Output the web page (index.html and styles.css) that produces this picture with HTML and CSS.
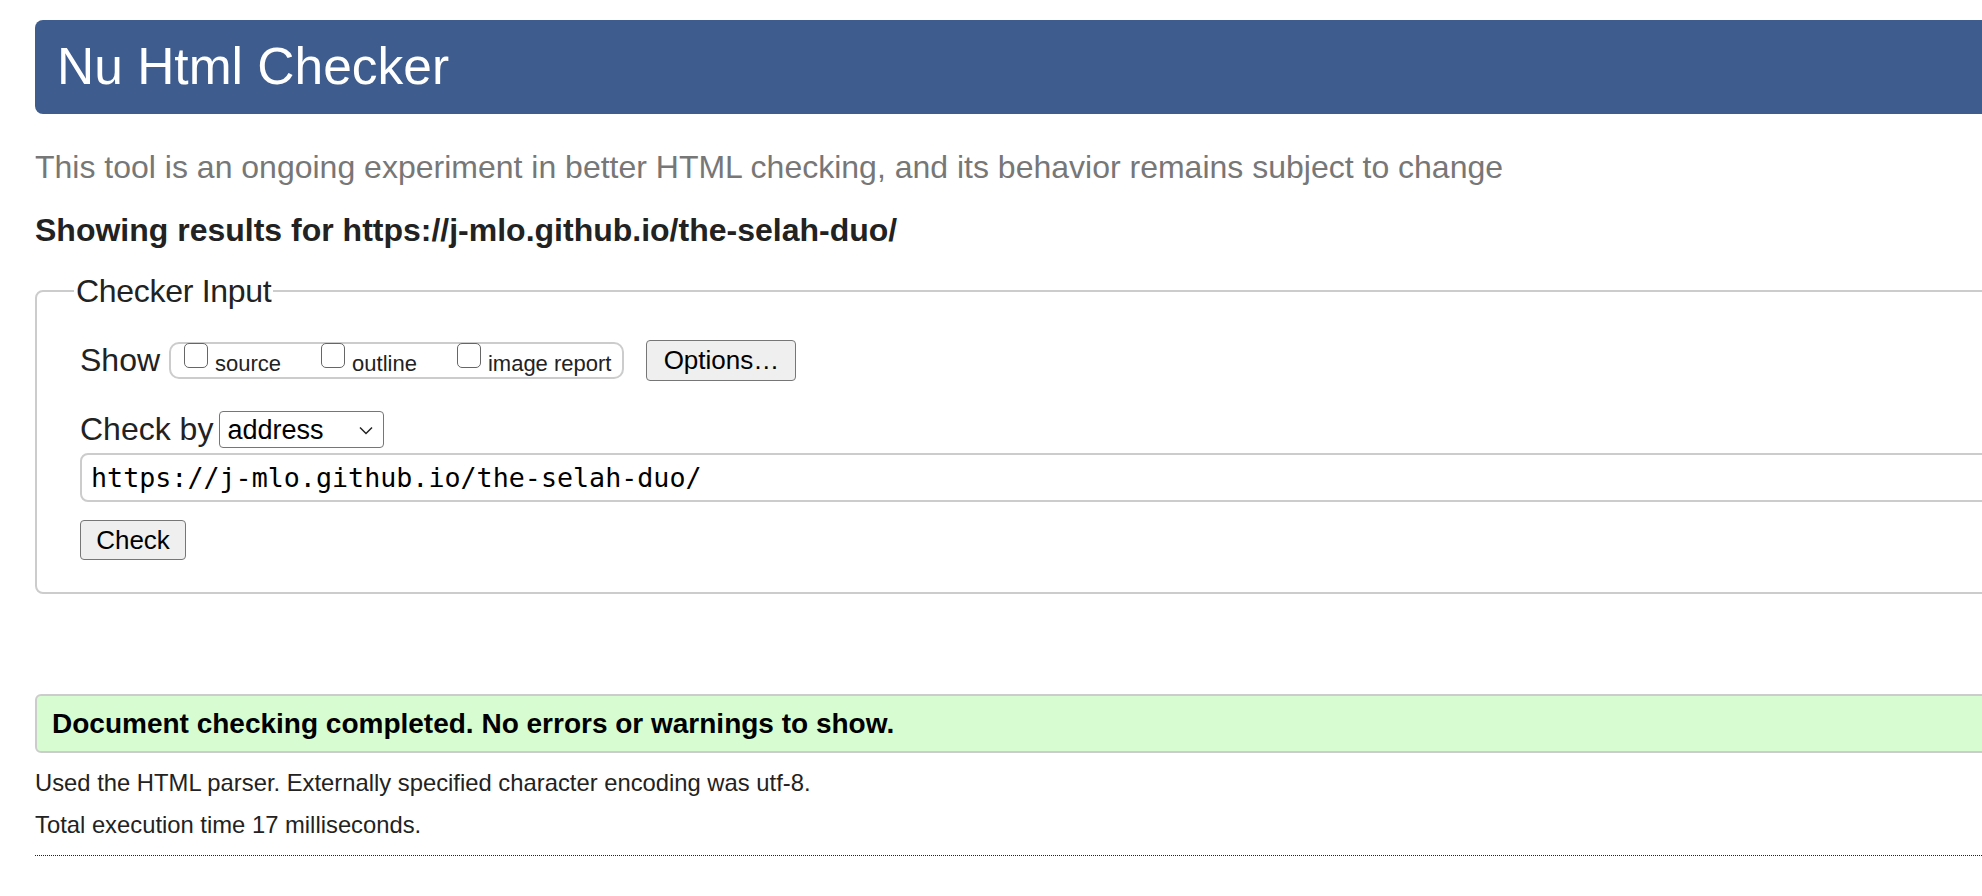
FILE: index.html
```html
<!DOCTYPE html>
<html lang="en">
<head>
<meta charset="utf-8">
<title>Showing results for https://j-mlo.github.io/the-selah-duo/ - Nu Html Checker</title>
<link rel="stylesheet" href="styles.css">
</head>
<body>
<div class="page">
  <h1 class="banner">Nu Html Checker</h1>
  <p class="subtitle">This tool is an ongoing experiment in better HTML checking, and its behavior remains subject to change</p>
  <h2 class="results-for">Showing results for https://j-mlo.github.io/the-selah-duo/</h2>

  <form class="checker-form">
    <fieldset class="checker-input">
      <legend class="legend">Checker Input</legend>

      <div class="row show-row">
        <span class="row-label">Show</span>
        <div class="show-group">
          <label class="opt"><input type="checkbox" class="box"><span class="opt-text">source</span></label>
          <label class="opt"><input type="checkbox" class="box"><span class="opt-text">outline</span></label>
          <label class="opt"><input type="checkbox" class="box"><span class="opt-text">image report</span></label>
        </div>
        <button type="button" class="btn options-btn">Options…</button>
      </div>

      <div class="row by-row">
        <span class="row-label">Check by</span>
        <span class="select-wrap">
          <select class="select"><option>address</option></select>
          <svg class="chevron" width="14" height="9" viewBox="0 0 14 9"><path d="M1 1.5 L7 7.5 L13 1.5" fill="none" stroke="#222" stroke-width="1.5"/></svg>
        </span>
      </div>

      <input type="text" class="url" value="https://j-mlo.github.io/the-selah-duo/">

      <div class="row submit-row">
        <button type="button" class="btn check-btn">Check</button>
      </div>
    </fieldset>
  </form>

  <div class="success">Document checking completed. No errors or warnings to show.</div>
  <p class="details">Used the HTML parser. Externally specified character encoding was utf-8.</p>
  <p class="details second">Total execution time 17 milliseconds.</p>
  <hr class="dotted">
</div>
</body>
</html>
```

FILE: styles.css
```css
html, body {
  margin: 0;
  background: #fff;
}
body {
  padding: 20px 0 0 35px;
  font-family: "Liberation Sans", Arial, Helvetica, sans-serif;
  color: #222;
  overflow: hidden;
}
.page {
  margin-right: -40px;
}
.banner {
  margin: 0;
  height: 94px;
  line-height: 92px;
  padding-left: 22px;
  background: #3e5c8e;
  color: #fff;
  font-size: 51.5px;
  font-weight: normal;
  border-radius: 8px;
}
.subtitle {
  margin: 35px 0 0;
  font-size: 32px;
  line-height: 37px;
  color: #777;
}
.results-for {
  margin: 26px 0 0;
  font-size: 32px;
  line-height: 37px;
  font-weight: bold;
  color: #222;
}
.checker-form {
  margin: 24px 0 0;
}
.checker-input {
  margin: 0;
  border: 2px solid #ccc;
  border-radius: 8px;
  padding: 31px 0 32px 43px;
}
.legend {
  font-size: 32px;
  line-height: 36px;
  padding: 0 2px;
  margin-left: -6px;
  letter-spacing: -0.3px;
}
.row {
  display: flex;
  align-items: center;
}
.row-label {
  font-size: 32px;
}
.show-row {
  height: 41px;
}
.show-group {
  display: flex;
  align-items: center;
  margin-left: 9px;
  height: 33px;
  border: 2px solid #ccc;
  border-radius: 10px;
  padding: 0 11px 0 13px;
  gap: 40px;
}
.opt {
  display: flex;
  align-items: center;
  gap: 7px;
}
.box {
  appearance: none;
  -webkit-appearance: none;
  margin: 0;
  width: 24px;
  height: 25px;
  border: 1.5px solid #666;
  border-radius: 5px;
  background: #fff;
  position: relative;
  top: -5px;
}
.opt-text {
  font-size: 22px;
  line-height: 26px;
  position: relative;
  top: 3px;
}
.btn {
  font-family: "Liberation Sans", Arial, Helvetica, sans-serif;
  background: #efefef;
  color: #000;
  border: 1.5px solid #767676;
  border-radius: 4px;
  padding: 0;
}
.options-btn {
  margin-left: 22px;
  width: 150px;
  height: 41px;
  font-size: 26px;
}
.by-row {
  margin-top: 30px;
  height: 37px;
}
.select-wrap {
  position: relative;
  margin-left: 6px;
  display: inline-block;
  height: 37px;
}
.select {
  appearance: none;
  -webkit-appearance: none;
  width: 165px;
  height: 37px;
  border: 1.5px solid #767676;
  border-radius: 4px;
  background: #fff;
  color: #000;
  font-family: "Liberation Sans", Arial, Helvetica, sans-serif;
  font-size: 27px;
  padding: 0 0 0 7px;
  margin: 0;
}
.chevron {
  position: absolute;
  right: 11px;
  top: 15px;
  pointer-events: none;
}
.url {
  display: block;
  box-sizing: border-box;
  width: 100%;
  height: 49px;
  margin: 5px 0 0;
  border: 2px solid #ccc;
  border-radius: 8px;
  padding: 0 0 0 9px;
  font-family: "DejaVu Sans Mono", "Liberation Mono", monospace;
  font-size: 26.7px;
  color: #000;
  background: #fff;
  outline: none;
}
.submit-row {
  margin-top: 18px;
}
.check-btn {
  width: 106px;
  height: 40px;
  font-size: 26px;
}
.success {
  margin-top: 100px;
  height: 59px;
  box-sizing: border-box;
  border: 2px solid #ccc;
  border-radius: 6px;
  background: #d7fcd2;
  color: #000;
  font-weight: bold;
  font-size: 28px;
  line-height: 55px;
  padding-left: 15px;
}
.details {
  margin: 16px 0 0;
  font-size: 23.8px;
  line-height: 28px;
  color: #222;
}
.details.second {
  margin-top: 14px;
}
.dotted {
  margin: 16px 0 0;
  border: 0;
  border-top: 1.5px dotted #222;
  height: 0;
}
```
